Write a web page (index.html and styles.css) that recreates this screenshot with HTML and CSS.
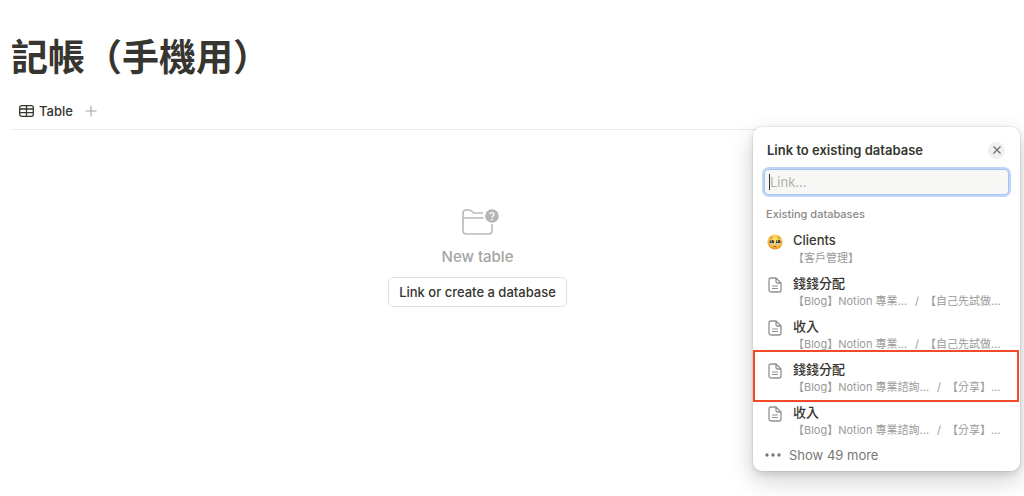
FILE: index.html
```html
<!DOCTYPE html>
<html lang="zh-Hant">
<head>
    <meta charset="UTF-8">
    <meta name="viewport" content="width=device-width, initial-scale=1.0">
    <title>記帳（手機用）</title>
    <link rel="stylesheet" href="styles.css">
</head>
<body>
    <!-- Shared icons -->
    <svg class="sprite" aria-hidden="true">
        <symbol id="icon-page" viewBox="0 0 14 16">
            <path d="M3 1h5l5 5v7a2 2 0 0 1-2 2H3a2 2 0 0 1-2-2V3a2 2 0 0 1 2-2z M8 1v3.500a1.500 1.500 0 0 0 1.500 1.500H13" fill="none" stroke="currentColor" stroke-width="1.300" stroke-linejoin="round"/>
            <path d="M4 9h6M4 11.500h6" stroke="currentColor" stroke-width="1"/>
        </symbol>
    </svg>

    <main class="page">
        <h1>記帳（手機用）</h1>

        <div class="tabs">
            <button class="tab" type="button">
                <svg width="15" height="12" viewBox="0 0 15 12" fill="none" stroke="currentColor" stroke-width="1.300">
                    <rect x="0.700" y="0.700" width="13.600" height="10.600" rx="2"/>
                    <path d="M1 4h13M1 7.700h13M7.500 1v10"/>
                </svg>
                Table
            </button>
            <button class="add-view" type="button" aria-label="Add view">
                <svg width="12" height="12" viewBox="0 0 12 12" stroke="currentColor" stroke-width="1.100">
                    <path d="M6 0.500v11M0.500 6h11"/>
                </svg>
            </button>
        </div>

        <section class="empty">
            <svg width="44" height="28" viewBox="0 0 44 28" fill="none">
                <path d="M27 5H18.500C16 5 16 2 13.500 2H10Q7 2 7 5V22.500Q7 26 10.500 26H32.500Q36 26 36 22.500V16M7 10H27.500" stroke="#b9b9b7" stroke-width="1.600"/>
                <circle cx="36" cy="8" r="6.800" fill="#b5b5b3"/>
                <path d="M34 6.500C34 4 38 4 38 6.400C38 8 36 7.800 36 9.500" stroke="#fff" stroke-width="1.300"/>
                <circle cx="36" cy="11.600" r="0.900" fill="#fff"/>
            </svg>
            <p>New table</p>
            <button class="link-button" type="button">Link or create a database</button>
        </section>
    </main>

    <aside class="popup">
        <header class="popup-header">
            <h2>Link to existing database</h2>
            <button class="close" type="button" aria-label="Close">
                <svg width="8" height="8" viewBox="0 0 8 8" stroke="currentColor" stroke-width="1.300">
                    <path d="M0.500 0.500l7 7M7.500 0.500l-7 7"/>
                </svg>
            </button>
        </header>

        <div class="search">
            <span class="caret"></span>
            <input type="text" placeholder="Link..." aria-label="Link">
        </div>

        <h3>Existing databases</h3>
        <ul class="databases">
            <li>
                <a href="#">
                    <svg class="face" width="16" height="16" viewBox="0 0 16 16">
                        <defs>
                            <radialGradient id="skin" cx="50%" cy="35%" r="65%">
                                <stop offset="0" stop-color="#ffe46b"/>
                                <stop offset="0.700" stop-color="#f9bc3c"/>
                                <stop offset="1" stop-color="#e88e28"/>
                            </radialGradient>
                        </defs>
                        <circle cx="8" cy="8" r="7.600" fill="url(#skin)"/>
                        <path d="M2.500 4.500Q4 3 5.500 3.300M10.500 3.300Q12 3 13.500 4.500" fill="none" stroke="#a5672a" stroke-width="0.700"/>
                        <circle cx="4.800" cy="8" r="2.300" fill="#45301f"/>
                        <circle cx="11.200" cy="8" r="2.300" fill="#45301f"/>
                        <path d="M2.600 9.300Q4.800 8.300 7 9.300Q6.500 10.800 4.800 10.800T2.600 9.300M9 9.300Q11.200 8.300 13.400 9.300Q12.900 10.800 11.200 10.800T9 9.300" fill="#b9d8e2"/>
                        <circle cx="4.200" cy="7" r="0.700" fill="#fff"/>
                        <circle cx="10.600" cy="7" r="0.700" fill="#fff"/>
                        <path d="M6.500 12.800Q8 11.800 9.500 12.800" fill="none" stroke="#8e4b1e" stroke-width="0.800"/>
                    </svg>
                    <div class="info">
                        <div class="name">Clients</div>
                        <div class="path"><span>【客戶管理】</span></div>
                    </div>
                </a>
            </li>
            <li>
                <a href="#">
                    <svg class="doc"><use href="#icon-page"/></svg>
                    <div class="info">
                        <div class="name">錢錢分配</div>
                        <div class="path"><span>【Blog】Notion 專業...</span><span class="slash">/</span><span>【自己先試做...</span></div>
                    </div>
                </a>
            </li>
            <li>
                <a href="#">
                    <svg class="doc"><use href="#icon-page"/></svg>
                    <div class="info">
                        <div class="name">收入</div>
                        <div class="path"><span>【Blog】Notion 專業...</span><span class="slash">/</span><span>【自己先試做...</span></div>
                    </div>
                </a>
            </li>
            <li class="marked">
                <a href="#">
                    <svg class="doc"><use href="#icon-page"/></svg>
                    <div class="info">
                        <div class="name">錢錢分配</div>
                        <div class="path"><span>【Blog】Notion 專業諮詢...</span><span class="slash">/</span><span>【分享】...</span></div>
                    </div>
                </a>
            </li>
            <li>
                <a href="#">
                    <svg class="doc"><use href="#icon-page"/></svg>
                    <div class="info">
                        <div class="name">收入</div>
                        <div class="path"><span>【Blog】Notion 專業諮詢...</span><span class="slash">/</span><span>【分享】...</span></div>
                    </div>
                </a>
            </li>
        </ul>

        <button class="more" type="button">
            <svg width="16" height="4" viewBox="0 0 16 4" fill="currentColor">
                <circle cx="2" cy="2" r="1.700"/>
                <circle cx="8" cy="2" r="1.700"/>
                <circle cx="14" cy="2" r="1.700"/>
            </svg>
            Show 49 more
        </button>
    </aside>
</body>
</html>
```
FILE: styles.css
```css
* {
    margin: 0;
    padding: 0;
    box-sizing: border-box;
}

body {
    font-family: Inter, "Noto Sans CJK TC", sans-serif;
    font-size: 13px;
    color: #37352f;
    background: #fff;
}

button {
    font: inherit;
    color: inherit;
    background: none;
    border: none;
    cursor: pointer;
}

a {
    color: inherit;
    text-decoration: none;
}

.sprite {
    display: none;
}

.page {
    margin-right: 80px;
    padding: 34px 0 0 11px;
}

h1 {
    font-size: 37px;
    line-height: 48px;
    font-weight: 700;
}

.tabs {
    display: flex;
    align-items: center;
    gap: 12px;
    height: 48px;
    padding: 10px 0 0 8px;
    border-bottom: 1px solid #e9e9e8;
}

.tab {
    display: flex;
    align-items: center;
    gap: 5px;
    font-weight: 500;
}

.add-view {
    display: flex;
    color: #a5a4a1;
}

.empty {
    display: flex;
    flex-direction: column;
    align-items: center;
    padding-top: 78px;
}

.empty p {
    margin: 10px 0 9px;
    font-size: 15px;
    line-height: 22px;
    font-weight: 500;
    color: #a5a4a1;
}

.link-button {
    height: 30px;
    padding: 0 10px;
    border: 1px solid #e0e0de;
    border-radius: 5px;
    font-weight: 500;
}

/* Popup */
.popup {
    position: absolute;
    top: 127px;
    right: 4px;
    width: 267px;
    padding: 11px 10px 5px;
    background: #fff;
    border-radius: 9px;
    box-shadow: 0 0 0 1px rgba(15, 15, 15, 0.05), 0 3px 6px rgba(15, 15, 15, 0.1), 0 9px 24px rgba(15, 15, 15, 0.2);
}

.popup-header {
    display: flex;
    align-items: center;
    justify-content: space-between;
    height: 24px;
    padding: 0 5px 0 4px;
}

.popup-header h2 {
    font-size: 13px;
    font-weight: 600;
}

.close {
    display: flex;
    align-items: center;
    justify-content: center;
    width: 17px;
    height: 17px;
    border-radius: 50%;
    background: #efefee;
    color: #73726e;
}

.search {
    display: flex;
    align-items: center;
    height: 26px;
    margin: 7px 1px 0;
    padding: 0 5px;
    border-radius: 5px;
    background: #f7f7f5;
    box-shadow: 0 0 0 1px #a3c4f3 inset, 0 0 0 2px #bdd5f7;
}

.caret {
    width: 1px;
    height: 16px;
    background: #37352f;
}

.search input {
    flex: 1;
    min-width: 0;
    border: none;
    outline: none;
    background: none;
    font: inherit;
}

.search input::placeholder {
    color: #b3b2af;
}

.popup h3 {
    margin-top: 10px;
    padding-left: 3px;
    font-size: 11px;
    line-height: 18px;
    font-weight: 500;
    color: #8a8986;
}

.databases {
    margin-top: 7px;
    list-style: none;
}

.databases li {
    position: relative;
}

.databases a {
    display: flex;
    align-items: flex-start;
    gap: 10px;
    height: 43px;
    padding-left: 4px;
}

.databases li:last-child a {
    height: 42px;
}

.face {
    flex: none;
    margin-top: 4px;
}

.doc {
    flex: none;
    width: 14px;
    height: 16px;
    margin: 4px 1px 0;
    color: #91918e;
}

.info {
    flex: 1;
}

.name {
    line-height: 20px;
    font-weight: 500;
}

.path {
    display: flex;
    gap: 6px;
    font-size: 11px;
    line-height: 16px;
    color: #9b9a97;
    white-space: nowrap;
}

.slash {
    margin-left: 2px;
}

/* Red frame drawn over the chosen row */
.marked::after {
    content: "";
    position: absolute;
    inset: -9px -9px 0 -10px;
    border: 2px solid #f04a2a;
    pointer-events: none;
}

.more {
    display: flex;
    align-items: center;
    gap: 8px;
    height: 22px;
    padding-left: 2px;
    color: #787774;
}
```
